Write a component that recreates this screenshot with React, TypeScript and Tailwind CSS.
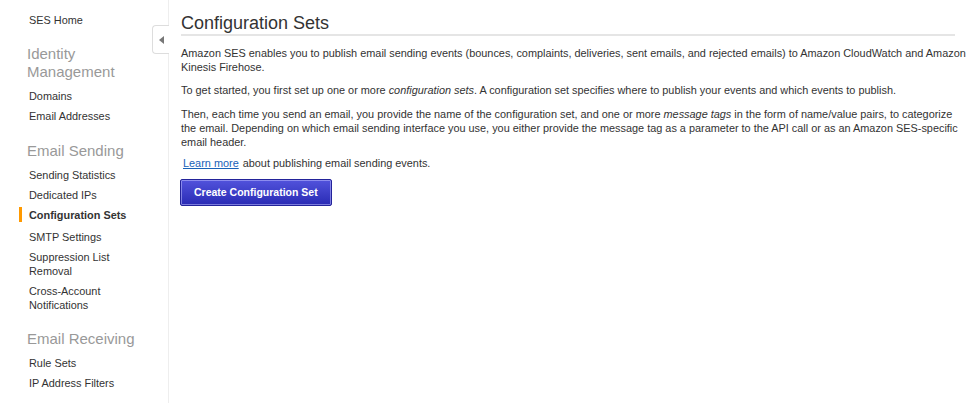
import React from "react";

const NavItem: React.FC<{ label: React.ReactNode; active?: boolean }> = ({ label, active }) => (
  <div className={`relative pl-[29px] pr-2 leading-[14px] ${active ? "pt-[3px] pb-[5px]" : "py-[3px]"}`}>
    {active && <span className="absolute left-[19px] top-[2px] h-[15px] w-[3px] bg-[#f90]" />}
    <span className={active ? "font-bold text-[#333]" : "text-[#333]"}>{label}</span>
  </div>
);

const SectionTitle: React.FC<{ children: React.ReactNode }> = ({ children }) => (
  <div className="pl-[27px] pr-2 text-[15px] leading-[18px] text-[#999]">{children}</div>
);

const App: React.FC = () => {
  return (
    <div
      className="flex w-[979px] h-[403px] overflow-hidden bg-white text-[10.9px] text-[#333]"
      style={{ fontFamily: '"Liberation Sans", Arial, sans-serif' }}
    >
      {/* sidebar */}
      <div className="relative w-[169px] shrink-0 border-r border-[#eee] pt-[10px]">
        <NavItem label="SES Home" />

        <div className="mt-[15px]">
          <SectionTitle>
            Identity
            <br />
            Management
          </SectionTitle>
        </div>
        <div className="mt-[5px] flex flex-col">
          <NavItem label="Domains" />
          <NavItem label="Email Addresses" />
        </div>

        <div className="mt-[16px]">
          <SectionTitle>Email Sending</SectionTitle>
        </div>
        <div className="mt-[5px] flex flex-col">
          <NavItem label="Sending Statistics" />
          <NavItem label="Dedicated IPs" />
          <NavItem label="Configuration Sets" active />
          <NavItem label="SMTP Settings" />
          <NavItem
            label={
              <>
                Suppression List
                <br />
                Removal
              </>
            }
          />
          <NavItem
            label={
              <>
                Cross-Account
                <br />
                Notifications
              </>
            }
          />
        </div>

        <div className="mt-[15px]">
          <SectionTitle>Email Receiving</SectionTitle>
        </div>
        <div className="mt-[5px] flex flex-col">
          <NavItem label="Rule Sets" />
          <NavItem label="IP Address Filters" />
        </div>

        {/* collapse tab */}
        <div className="absolute right-[-1px] top-[25px] w-[17px] h-[29px] bg-white border border-r-0 border-[#ddd] rounded-l-[4px] flex items-center justify-center">
          <span className="block w-0 h-0 border-y-[4px] border-y-transparent border-r-[5px] border-r-[#777]" />
        </div>
      </div>

      {/* main */}
      <div className="flex-1 pl-[12px] pr-[12px] pt-[12px]">
        <h1 className="mr-[12px] text-[18px] leading-[22px] text-[#333] border-b-2 border-[#e5e5e5]">
          Configuration Sets
        </h1>

        <p className="mt-[10px] leading-[14px]">
          Amazon SES enables you to publish email sending events (bounces, complaints, deliveries, sent emails, and
          rejected emails) to Amazon CloudWatch and Amazon Kinesis Firehose.
        </p>
        <p className="mt-[9px] leading-[14px]">
          To get started, you first set up one or more <i>configuration sets</i>. A configuration set specifies where to
          publish your events and which events to publish.
        </p>
        <p className="mt-[10px] pr-[6px] leading-[14px]">
          Then, each time you send an email, you provide the name of the configuration set, and one or more{" "}
          <i>message tags</i> in the form of name/value pairs, to categorize the email. Depending on which email sending
          interface you use, you either provide the message tag as a parameter to the API call or as an Amazon
          SES-specific email header.
        </p>
        <p className="mt-[7px] leading-[14px] pl-[2px]">
          <a className="text-[#1a62b8] underline">Learn more</a>
          <span className="ml-[4px]">about publishing email sending events.</span>
        </p>

        <button
          className="mt-[9px] ml-[-1px] h-[27px] px-[13px] border border-[#23239a] rounded-[2px] text-white font-bold text-[10.5px] shadow-[inset_0_0_0_1px_rgba(190,190,255,0.55)] bg-gradient-to-b from-[#5252dc] to-[#2a2ab4]"
        >
          Create Configuration Set
        </button>
      </div>
    </div>
  );
};

export default App;
